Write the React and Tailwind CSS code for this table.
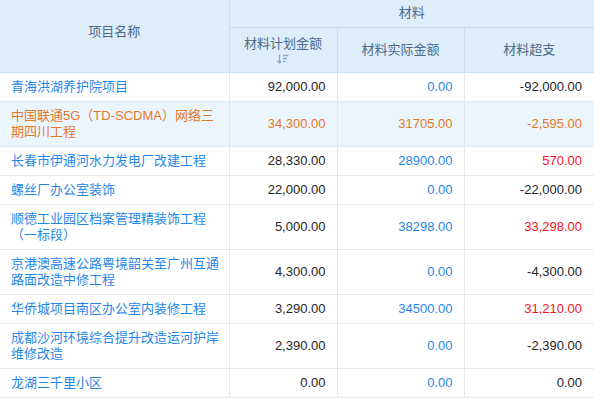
import React from 'react';

const ROWS = [
  { name: '青海洪湖养护院项目', plan: '92,000.00', actual: '0.00', over: '-92,000.00', overTone: 'dark' },
  { name: '中国联通5G（TD-SCDMA）网络三期四川工程', plan: '34,300.00', actual: '31705.00', over: '-2,595.00', overTone: 'dark', active: true },
  { name: '长春市伊通河水力发电厂改建工程', plan: '28,330.00', actual: '28900.00', over: '570.00', overTone: 'red' },
  { name: '螺丝厂办公室装饰', plan: '22,000.00', actual: '0.00', over: '-22,000.00', overTone: 'dark' },
  { name: '顺德工业园区档案管理精装饰工程（一标段）', plan: '5,000.00', actual: '38298.00', over: '33,298.00', overTone: 'red' },
  { name: '京港澳高速公路粤境韶关至广州互通路面改造中修工程', plan: '4,300.00', actual: '0.00', over: '-4,300.00', overTone: 'dark' },
  { name: '华侨城项目南区办公室内装修工程', plan: '3,290.00', actual: '34500.00', over: '31,210.00', overTone: 'red' },
  { name: '成都沙河环境综合提升改造运河护岸维修改造', plan: '2,390.00', actual: '0.00', over: '-2,390.00', overTone: 'dark' },
  { name: '龙湖三千里小区', plan: '0.00', actual: '0.00', over: '0.00', overTone: 'dark' },
];

function SortIcon() {
  return (
    <svg width="12" height="10" viewBox="0 0 12 10" className="inline-block" fill="none" stroke="#86abd3" strokeWidth="1.3">
      <path d="M2.5 0.5v8.5M0.5 7l2 2 2-2" />
      <path d="M6 1.5h5.5M6 4.5h4M6 7.5h2.5" />
    </svg>
  );
}

export default function App() {
  return (
    <div className="w-[594px] h-[398px] overflow-hidden bg-white" style={{ fontFamily: '"Liberation Sans", "Noto Sans CJK SC", sans-serif' }}>
      <table className="w-[594px] border-collapse table-fixed text-[13px] leading-[16px]">
        <colgroup>
          <col className="w-[229px]" />
          <col className="w-[108px]" />
          <col className="w-[127px]" />
          <col className="w-[130px]" />
        </colgroup>
        <thead className="bg-[#deedfa] text-[#4c6a8a]">
          <tr className="h-[27px]">
            <th rowSpan={2} className="font-normal border-r border-b border-[#c9ddef] text-center pb-[8px]">项目名称</th>
            <th colSpan={3} className="font-normal border-b border-[#c9ddef] text-center">材料</th>
          </tr>
          <tr className="h-[45px]">
            <th className="font-normal border-r border-b border-[#c9ddef] text-center align-top pt-[8px]">
              <div>材料计划金额</div>
              <div className="mt-[2px] leading-[10px]"><SortIcon /></div>
            </th>
            <th className="font-normal border-r border-b border-[#c9ddef] text-center">材料实际金额</th>
            <th className="font-normal border-b border-[#c9ddef] text-center">材料超支</th>
          </tr>
        </thead>
        <tbody>
          {ROWS.map((r, i) => {
            const base = r.active ? 'text-[#e8781f]' : '';
            return (
              <tr key={i} className={r.active ? 'bg-[#ebf5fe]' : 'bg-white'}>
                <td className={`border-r border-b border-[#e6e6e6] pl-[11px] pr-[6px] py-[6px] ${r.active ? 'text-[#e8781f]' : 'text-[#1f87e8]'}`}>
                  {r.name}
                </td>
                <td className={`border-r border-b border-[#e6e6e6] px-[11px] py-[6px] text-right ${r.active ? base : 'text-[#262626]'}`}>
                  {r.plan}
                </td>
                <td className={`border-r border-b border-[#e6e6e6] px-[11px] py-[6px] text-right ${r.active ? base : 'text-[#1f87e8]'}`}>
                  {r.actual}
                </td>
                <td className={`border-b border-[#e6e6e6] px-[11px] pr-[12px] py-[6px] text-right ${r.active ? base : r.overTone === 'red' ? 'text-[#f5141e]' : 'text-[#262626]'}`}>
                  {r.over}
                </td>
              </tr>
            );
          })}
        </tbody>
      </table>
    </div>
  );
}
